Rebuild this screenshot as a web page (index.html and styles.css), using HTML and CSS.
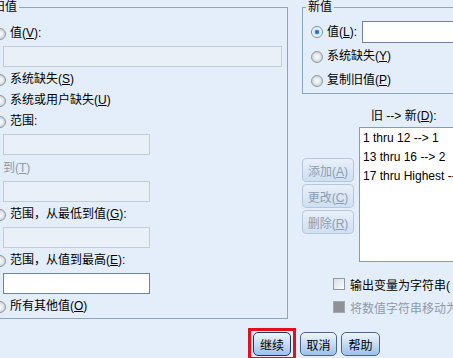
FILE: index.html
```html
<!DOCTYPE html>
<html lang="zh-CN">
<head>
    <meta charset="UTF-8">
    <title>旧值和新值</title>
    <link rel="stylesheet" href="styles.css">
</head>
<body>

    <div class="dialog">
        <div class="main">
            <!-- 旧值 -->
            <fieldset class="group old">
                <legend>旧值</legend>
                <div class="opt"><span class="radio"></span>值(<u>V</u>):</div>
                <input class="field long" type="text" disabled>
                <div class="opt"><span class="radio"></span>系统缺失(<u>S</u>)</div>
                <div class="opt"><span class="radio"></span>系统或用户缺失(<u>U</u>)</div>
                <div class="opt"><span class="radio"></span>范围:</div>
                <input class="field" type="text" disabled>
                <div class="opt dim sub">到(<u>T</u>)</div>
                <input class="field" type="text" disabled>
                <div class="opt"><span class="radio"></span>范围，从最低到值(<u>G</u>):</div>
                <input class="field" type="text" disabled>
                <div class="opt"><span class="radio"></span>范围，从值到最高(<u>E</u>):</div>
                <input class="field on" type="text">
                <div class="opt"><span class="radio"></span>所有其他值(<u>O</u>)</div>
            </fieldset>

            <div class="side">
                <!-- 新值 -->
                <fieldset class="group new">
                    <legend>新值</legend>
                    <div class="opt first"><span class="radio on"></span>值(<u>L</u>):<input class="field on inline" type="text"></div>
                    <div class="opt"><span class="radio"></span>系统缺失(<u>Y</u>)</div>
                    <div class="opt"><span class="radio"></span>复制旧值(<u>P</u>)</div>
                </fieldset>

                <div class="pairs">
                    <div class="btn-col">
                        <button disabled>添加(<u>A</u>)</button>
                        <button disabled>更改(<u>C</u>)</button>
                        <button disabled>删除(<u>R</u>)</button>
                    </div>
                    <div class="list-col">
                        <div class="list-label">旧 --&gt; 新(<u>D</u>):</div>
                        <div class="list">
                            <div class="item">1 thru 12 --&gt; 1</div>
                            <div class="item">13 thru 16 --&gt; 2</div>
                            <div class="item">17 thru Highest --&gt; 3</div>
                        </div>
                    </div>
                </div>

                <div class="checks">
                    <div class="check"><span class="box"></span>输出变量为字符串(<u>B</u>)</div>
                    <div class="check dim"><span class="box off"></span>将数值字符串移动为数值(<u>M</u>)</div>
                </div>
            </div>
        </div>

        <div class="actions">
            <span class="focus"><button class="btn ok">继续</button></span>
            <button class="btn cancel">取消</button>
            <button class="btn help">帮助</button>
        </div>
    </div>

</body>
</html>
```

FILE: styles.css
```css
body {
    margin: 0;
    background-color: #e4eefa;
    font-family: "Liberation Sans", "Noto Sans CJK SC", sans-serif;
    font-size: 12px;
    color: #000;
    overflow: hidden;
}
.dialog {
    margin-left: -15px;
    width: 560px;
}
.main {
    display: flex;
    gap: 14px;
    align-items: flex-start;
}
/* group boxes */
.group {
    margin: 0;
    border: 1px solid #8ea4bb;
    min-width: 0;
    box-sizing: border-box;
}
.group legend {
    padding: 0 2px;
    line-height: 14px;
}
.old {
    width: 303px;
    padding: 9px 5px 1px 8px;
}
.old legend {
    margin-left: -3px;
}
.new {
    width: 100%;
    padding: 7px 0 2px 8px;
}
.new legend {
    margin-left: -5px;
}
.opt {
    display: flex;
    align-items: center;
    height: 21px;
    line-height: 21px;
    white-space: nowrap;
}
.new .opt + .opt {
    margin-top: 3px;
}
.new .opt.first {
    height: 22px;
}
.sub {
    height: 22px;
    padding-left: 9px;
}
.dim {
    color: #8d9aa9;
}
.radio {
    flex: none;
    width: 12px;
    height: 12px;
    box-sizing: border-box;
    border-radius: 50%;
    border: 1px solid #8c98a6;
    background: radial-gradient(circle closest-side, #fdfdfe 0, #e7eaee 60%, #cdd3da 100%);
    margin-right: 4px;
}
.radio.on {
    border-color: #6f8fb5;
    background: radial-gradient(circle closest-side, #1d63c4 0, #3f86df 40%, #d6e6f9 52%, #ffffff 100%);
}
/* text boxes */
.field {
    display: block;
    box-sizing: border-box;
    width: 147px;
    height: 21px;
    margin: 2px 0 2px 9px;
    padding: 0;
    border: 1px solid #c3ccd6;
    background-color: #e9f0f8;
}
.field.long {
    width: 279px;
}
.field.on {
    background-color: #fff;
    border-color: #6f849b;
}
.field.inline {
    width: 140px;
    height: 22px;
    margin: 0 0 0 5px;
}
/* old -> new list */
.pairs {
    display: flex;
    gap: 5px;
    margin-top: 14px;
    align-items: flex-start;
}
.btn-col {
    width: 52px;
    display: flex;
    flex-direction: column;
    gap: 2px;
    margin-top: 50px;
}
.btn-col button {
    height: 24px;
    padding: 0;
    font: inherit;
    color: #8d9db2;
    border: 1px solid #b5c7dc;
    border-radius: 4px;
    background: linear-gradient(#e8f0fa, #cfdff2);
}
.list-col {
    flex: 1;
}
.list-label {
    line-height: 16px;
    margin-left: 12px;
}
.list {
    margin-top: 3px;
    height: 135px;
    box-sizing: border-box;
    padding-top: 1px;
    background-color: #fff;
    border: 1px solid #7f9db9;
}
.item {
    line-height: 19px;
    padding-left: 3px;
    white-space: nowrap;
}
/* checkboxes */
.checks {
    margin: 12px 0 0 31px;
}
.check {
    display: flex;
    align-items: center;
    gap: 5px;
    height: 20px;
    margin-bottom: 3px;
    white-space: nowrap;
}
.box {
    flex: none;
    width: 12px;
    height: 12px;
    box-sizing: border-box;
    border: 1px solid #8e99a6;
    background: linear-gradient(135deg, #d9dee4, #fbfcfd);
}
.box.off {
    border-color: #a4a9af;
    background: #8e9297;
}
/* bottom buttons */
.actions {
    display: flex;
    align-items: center;
    margin-top: 8px;
    padding-left: 263px;
}
.focus {
    display: flex;
    border: 3px solid #e3101c;
    padding: 1px 2px;
}
.btn {
    height: 24px;
    padding: 0;
    font: inherit;
    color: #000;
    border: 1px solid #4a6586;
    border-radius: 5px;
    background: linear-gradient(#eef5fd, #c6dcf4 50%, #9cc1ec);
}
.ok {
    width: 38px;
    border-color: #22384f;
}
.cancel {
    width: 37px;
    margin-left: 4px;
}
.help {
    width: 39px;
    margin-left: 4px;
}
```
